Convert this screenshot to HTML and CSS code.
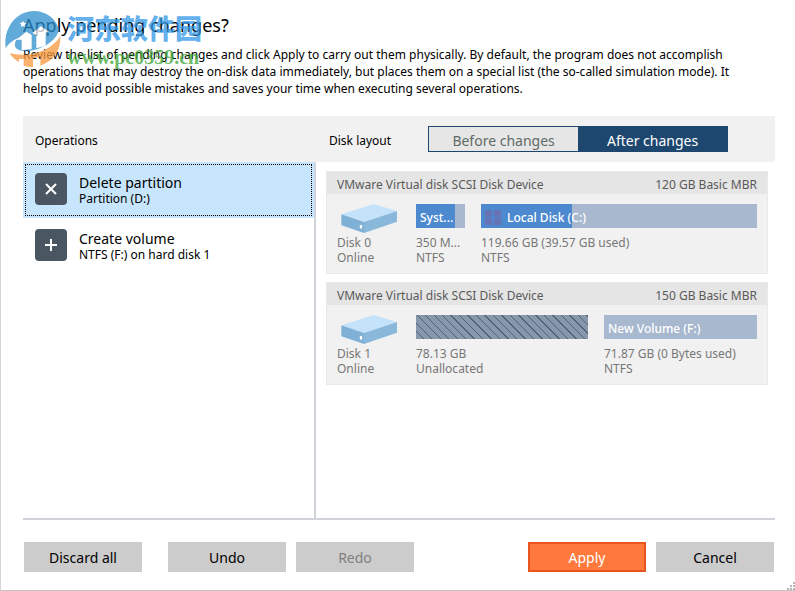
FILE: index.html
```html
<!DOCTYPE html>
<html lang="en">

<head>
    <meta charset="UTF-8">
    <meta name="viewport" content="width=device-width, initial-scale=1.0">
    <title>Apply pending changes</title>
    <link rel="stylesheet" href="styles.css">
</head>

<body>
    <div class="dialog">
        <h1>Apply pending changes?</h1>
        <p class="intro">Review the list of pending changes and click Apply to carry out them physically. By default, the program does not accomplish operations that may destroy the on-disk data immediately, but places them on a special list (the so-called simulation mode). It helps to avoid possible mistakes and saves your time when executing several operations.</p>

        <div class="toolbar">
            <h2 class="toolbar-left">Operations</h2>
            <div class="toolbar-right">
                <h2>Disk layout</h2>
                <div class="switch">
                    <button type="button" class="switch-button">Before changes</button>
                    <button type="button" class="switch-button active">After changes</button>
                </div>
            </div>
        </div>

        <div class="content">
            <div class="operations">
                <button type="button" class="operation selected">
                    <svg class="operation-icon" viewBox="0 0 32 32">
                        <rect width="32" height="32" rx="4" fill="#4a5661" />
                        <path d="M11 11l10 10M21 11l-10 10" stroke="#fff" stroke-width="2" />
                    </svg>
                    <span class="operation-text">
                        <span class="operation-name">Delete partition</span>
                        <span class="operation-info">Partition (D:)</span>
                    </span>
                </button>
                <button type="button" class="operation">
                    <svg class="operation-icon" viewBox="0 0 32 32">
                        <rect width="32" height="32" rx="4" fill="#4a5661" />
                        <path d="M16 10v12M10 16h12" stroke="#fff" stroke-width="2" />
                    </svg>
                    <span class="operation-text">
                        <span class="operation-name">Create volume</span>
                        <span class="operation-info">NTFS (F:) on hard disk 1</span>
                    </span>
                </button>
            </div>

            <div class="disks">
                <div class="disk">
                    <div class="disk-header">
                        <span>VMware Virtual disk SCSI Disk Device</span>
                        <span>120 GB Basic MBR</span>
                    </div>
                    <div class="disk-body">
                        <div class="disk-info">
                            <svg class="disk-icon" viewBox="0 0 168 87">
                                <path d="M1 31L98 0l70 21-99 33z" fill="#c4e3fb" />
                                <path d="M1 31l68 23v33L1 64z" fill="#7fb0d6" />
                                <path d="M69 54l99-33v32L69 87z" fill="#8ab8da" />
                                <ellipse cx="60" cy="68" rx="4" ry="6" fill="#fff" />
                            </svg>
                            <div>Disk 0</div>
                            <div>Online</div>
                        </div>
                        <div class="volumes">
                            <div class="volume" style="flex-grow: 49">
                                <div class="bar">
                                    <div class="bar-used" style="width: 80%"></div>
                                    <span class="bar-label">Syst...</span>
                                </div>
                                <div class="volume-text">350 M...</div>
                                <div class="volume-text">NTFS</div>
                            </div>
                            <div class="volume" style="flex-grow: 276">
                                <div class="bar">
                                    <div class="bar-used" style="width: 33%"></div>
                                    <svg class="bar-icon" viewBox="0 0 16 15">
                                        <path d="M0 0h7v7H0zM9 0h7v7H9zM0 8h7v7H0zM9 8h7v7H9z" fill="#6673b4" />
                                    </svg>
                                    <span class="bar-label">Local Disk (C:)</span>
                                </div>
                                <div class="volume-text">119.66 GB (39.57 GB used)</div>
                                <div class="volume-text">NTFS</div>
                            </div>
                        </div>
                    </div>
                </div>

                <div class="disk">
                    <div class="disk-header">
                        <span>VMware Virtual disk SCSI Disk Device</span>
                        <span>150 GB Basic MBR</span>
                    </div>
                    <div class="disk-body">
                        <div class="disk-info">
                            <svg class="disk-icon" viewBox="0 0 168 87">
                                <path d="M1 31L98 0l70 21-99 33z" fill="#c4e3fb" />
                                <path d="M1 31l68 23v33L1 64z" fill="#7fb0d6" />
                                <path d="M69 54l99-33v32L69 87z" fill="#8ab8da" />
                                <ellipse cx="60" cy="68" rx="4" ry="6" fill="#fff" />
                            </svg>
                            <div>Disk 1</div>
                            <div>Online</div>
                        </div>
                        <div class="volumes">
                            <div class="volume" style="flex-grow: 172">
                                <div class="bar unallocated"></div>
                                <div class="volume-text">78.13 GB</div>
                                <div class="volume-text">Unallocated</div>
                            </div>
                            <div class="volume" style="flex-grow: 153">
                                <div class="bar">
                                    <span class="bar-label">New Volume (F:)</span>
                                </div>
                                <div class="volume-text">71.87 GB (0 Bytes used)</div>
                                <div class="volume-text">NTFS</div>
                            </div>
                        </div>
                    </div>
                </div>
            </div>
        </div>

        <div class="footer">
            <button type="button" class="button discard">Discard all</button>
            <button type="button" class="button">Undo</button>
            <button type="button" class="button" disabled>Redo</button>
            <button type="button" class="button primary">Apply</button>
            <button type="button" class="button">Cancel</button>
        </div>

        <svg class="grip" viewBox="0 0 8 8">
            <path d="M6 0h2v2H6zM3 3h2v2H3zM6 3h2v2H6zM0 6h2v2H0zM3 6h2v2H3zM6 6h2v2H6z" fill="#b5b5b5" />
        </svg>

        <div class="watermark">
            <svg class="watermark-logo" viewBox="0 0 168 168">
                <path d="M2 112C-6 50 35 0 86 0c38 0 68 24 76 56-6 28-38 52-78 62-30 6-50 0-54-12-2-10 2-18 10-26-20 10-34 22-38 32z" fill="#2d8fcf" />
                <path d="M34 86l30-24 16 10v42l-30 4V86z" fill="#fff" />
                <path d="M82 66l26-20 26 18h-12v40l-28 8V72z" fill="#fff" />
                <path d="M54 29l3 6 7 1-5 5 1 7-6-3-6 3 1-7-5-5 7-1z" fill="#fff" />
                <path d="M166 76c2 42-22 76-60 88v-28c-8 4-14 5-22 6v26c-10 0-20-2-28-4v-20c-8 0-12 0-14-1v10c-14-8-22-16-28-26 60 14 124-6 152-51z" fill="#f7993d" />
            </svg>
            <div>
                <div class="watermark-name" lang="zh-CN">河东软件园</div>
                <div class="watermark-url">www.pc0359.cn</div>
            </div>
        </div>
    </div>
</body>

</html>
```
FILE: styles.css
```css
* {
    box-sizing: border-box;
}

body {
    margin: 0;
    font-family: "Noto Sans", "Open Sans", sans-serif;
    font-size: 12px;
    line-height: 15px;
    color: #000;
    background: #fff;
}

button {
    font-family: inherit;
    color: inherit;
    padding: 0;
    border: none;
    border-radius: 0;
    cursor: pointer;
}

h1,
h2,
p {
    margin: 0;
    font-weight: normal;
}

h1 {
    font-size: 18px;
    line-height: 24px;
}

h2 {
    font-size: 12px;
}

.dialog {
    position: relative;
    display: flex;
    flex-direction: column;
    min-height: 100vh;
    padding: 13px 20px 18px 22px;
    border-left: 1px solid #d4d4d4;
    border-bottom: 1px solid #c4c4c4;
}

.intro {
    margin-top: 9px;
    padding-right: 16px;
    line-height: 17px;
}

/* header row */
.toolbar {
    display: flex;
    align-items: center;
    height: 46px;
    margin-top: 19px;
    background: #f1f1f1;
}

.toolbar h2 {
    padding-top: 2px;
}

.toolbar-left {
    width: 293px;
    padding-left: 12px;
}

.toolbar-right {
    display: flex;
    flex: 1;
    align-items: center;
    gap: 37px;
    padding-left: 13px;
}

.switch {
    display: flex;
    width: 300px;
    height: 26px;
    border: 1px solid #1d476f;
}

.switch-button {
    flex: 1;
    padding-top: 2px;
    font-size: 14px;
    color: #5f6b66;
    background: #e6e6e6;
}

.switch-button.active {
    color: #fff;
    background: #1d476f;
}

.content {
    display: flex;
    flex: 1;
    border-bottom: 2px solid #d0d3d9;
}

/* operations list */
.operations {
    width: 293px;
    border-right: 2px solid #d0d3d9;
}

.operation {
    display: flex;
    align-items: center;
    gap: 12px;
    width: 100%;
    height: 56px;
    padding: 0 12px 2px;
    text-align: left;
    background: none;
}

.operation.selected {
    background: #c7e6fd;
    outline: 1px dotted #000;
    outline-offset: -3px;
}

.operation-icon {
    width: 32px;
    height: 32px;
}

.operation-text {
    display: flex;
    flex-direction: column;
    font-size: 12px;
    line-height: 15px;
}

.operation-name {
    padding-top: 1px;
    font-size: 14px;
    line-height: 17px;
}

/* disks */
.disks {
    display: flex;
    flex: 1;
    flex-direction: column;
    gap: 8px;
    padding: 9px 7px 9px 10px;
}

.disk {
    color: #777;
    background: #f1f1f1;
    border: 1px solid #e9e9e9;
}

.disk-header {
    display: flex;
    justify-content: space-between;
    padding: 4px 10px 0;
    line-height: 18px;
    color: #5a5a5a;
    background: #e5e5e5;
}

.disk-body {
    display: flex;
    gap: 10px;
    padding: 10px 10px 8px;
}

.disk-info {
    width: 69px;
}

.disk-icon {
    display: block;
    width: 56px;
    height: 29px;
    margin: 0 0 2px 4px;
}

.volumes {
    display: flex;
    flex: 1;
    gap: 16px;
}

.volume {
    flex-basis: 0;
    min-width: 0;
    white-space: nowrap;
}

.bar {
    position: relative;
    display: flex;
    align-items: center;
    gap: 6px;
    height: 24px;
    margin-bottom: 7px;
    padding: 2px 4px 0;
    font-weight: 500;
    color: #fff;
    background: #a8b8cf;
}

.bar-used {
    position: absolute;
    top: 0;
    bottom: 0;
    left: 0;
    background: #4c89cf;
}

.bar-icon {
    position: relative;
    width: 16px;
    height: 15px;
}

.bar-label {
    position: relative;
}

.unallocated {
    background: repeating-linear-gradient(45deg, #8798ad 0 5px, #536275 5px 6px);
}

/* bottom buttons */
.footer {
    display: flex;
    gap: 10px;
    padding: 22px 1px 0;
}

.button {
    width: 118px;
    height: 30px;
    font-size: 14px;
    background: #ccc;
}

.button:disabled {
    color: #808080;
    cursor: default;
}

.discard {
    margin-right: 16px;
}

.primary {
    margin-left: auto;
    color: #fff;
    background: #ff793c;
    border: 2px solid #e9541f;
}

.grip {
    position: absolute;
    right: 0;
    bottom: 0;
    width: 8px;
    height: 8px;
}

.watermark {
    position: absolute;
    top: 11px;
    left: 4px;
    display: flex;
    gap: 6px;
    opacity: 0.75;
    pointer-events: none;
}

.watermark-logo {
    width: 56px;
    height: 56px;
}

.watermark-name {
    font-family: "Noto Sans CJK SC", sans-serif;
    font-size: 27px;
    font-weight: 900;
    line-height: 34px;
    color: #3198e8;
}

.watermark-url {
    font-family: "Liberation Serif", serif;
    font-size: 20px;
    font-weight: bold;
    line-height: 24px;
    color: #3da535;
}
```
